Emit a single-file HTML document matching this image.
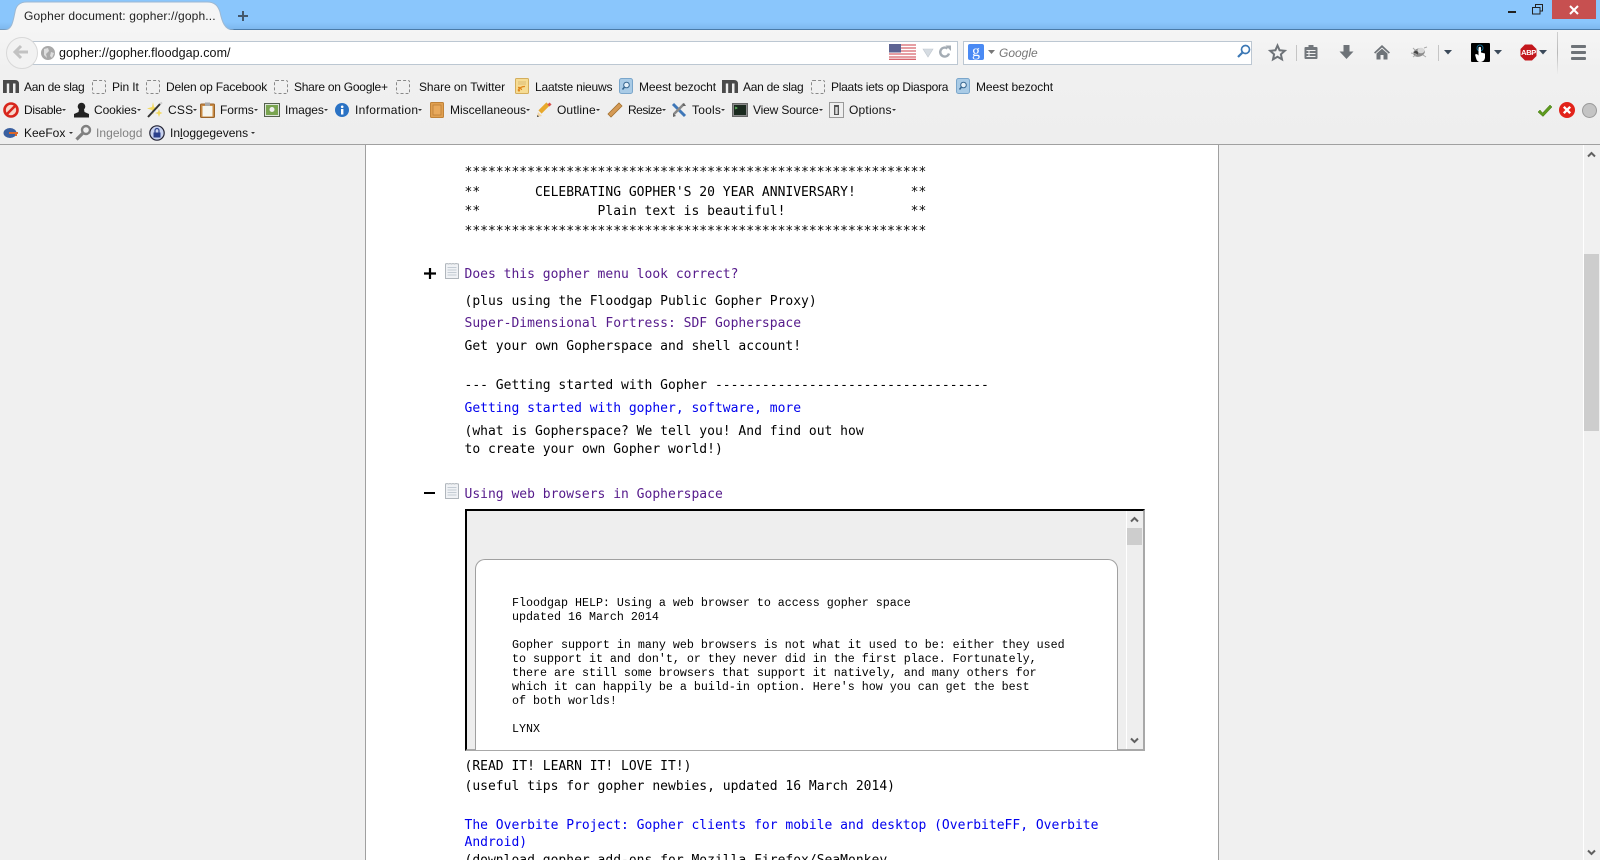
<!DOCTYPE html>
<html><head><meta charset="utf-8"><title>Gopher document</title>
<style>
html,body{margin:0;padding:0;width:1600px;height:860px;overflow:hidden;background:#f0f0f0}
#r{position:relative;width:1600px;height:860px;overflow:hidden;font-family:"Liberation Sans",sans-serif}
.a{position:absolute}
.t{position:absolute;white-space:nowrap;font-size:12px;line-height:16px;color:#111}
.t i{font-style:normal;display:inline-block;width:0;height:0;border:2px solid transparent;border-top:2px solid #333;border-bottom:0;margin-left:0;vertical-align:3px;letter-spacing:0}
.m{position:absolute;white-space:pre;font:13px/18px "DejaVu Sans Mono",monospace;color:#000;left:464.5px}
.v{color:#551a8b}.b{color:#0000ee}
.c{position:absolute;white-space:pre;font:11.67px/14px "Liberation Mono",monospace;color:#000;left:512px}
svg{position:absolute;overflow:visible}
.box{position:absolute;width:12px;height:12px;border:1px dashed #888;border-radius:2px;top:80px}
</style></head><body><div id="r">

<!-- title bar -->
<div class="a" style="left:0;top:0;width:1600px;height:30px;background:linear-gradient(#8ac6fc 0,#8ac6fc 22px,#7eb8ee 29px);border-bottom:1px solid #4a7ba8;box-sizing:border-box"></div>
<svg style="left:0;top:0" width="240" height="31"><path d="M0 30H4C12 30 13 22 15 12C16 6 19 2 27 2H207C215 2 218 6 220 12C222 22 225 30 233 30V31H0Z" fill="#f5f5f5" stroke="#9db8d2" stroke-width="1"/><rect x="0" y="30" width="240" height="1" fill="#f5f5f5"/></svg>
<div class="t" style="left:24px;top:8px;color:#222;letter-spacing:.15px">Gopher document: gopher://goph...</div>
<svg style="left:237px;top:10px" width="12" height="12"><path d="M6 1V11M1 6H11" stroke="#44586c" stroke-width="2"/></svg>
<div class="a" style="left:1552px;top:0;width:44px;height:19px;background:#c75050"></div>
<svg style="left:1566px;top:4px" width="16" height="12"><path d="M4 2L12 10M12 2L4 10" stroke="#fff" stroke-width="2"/></svg>
<div class="a" style="left:1508px;top:11px;width:8px;height:2px;background:#222"></div>
<svg style="left:1532px;top:4px" width="12" height="11"><path d="M3.5 3V.5H10.5V7H8M.5 3.5H8V10H.5Z" fill="none" stroke="#222"/></svg>

<!-- nav bar -->
<div class="a" style="left:0;top:30px;width:1600px;height:114px;background:linear-gradient(#f5f5f5 0,#f0f0f0 40px,#eeeeee 114px);border-bottom:1px solid #a0a0a0;box-sizing:content-box"></div>
<div class="a" style="left:24px;top:41px;width:932px;height:22px;background:#fff;border:1px solid #bcc7d2"></div>
<div class="a" style="left:6px;top:37px;width:30px;height:30px;border-radius:50%;background:#f2f2f2;border:1px solid #d8d8d8"></div>
<svg style="left:13px;top:45px" width="16" height="14"><path d="M8 1L2 7L8 13M2 7H15" fill="none" stroke="#c2c2c2" stroke-width="3"/></svg>
<svg style="left:41px;top:46px" width="14" height="14"><circle cx="7" cy="7" r="7" fill="#a9a9a9"/><path d="M3 3L7 2L8 5L5 8L6 12L3 9ZM10 6L13 7L11 12L9 10Z" fill="#dedede"/></svg>
<div class="t" style="left:59px;top:45px;font-size:12.5px;color:#111;letter-spacing:.07px">gopher://gopher.floodgap.com/</div>
<svg style="left:889px;top:44px" width="27" height="16"><rect width="27" height="16" fill="#fff"/><path d="M0 1H27M0 4H27M0 7H27M0 10H27M0 13H27M0 15.3H27" stroke="#d8636c" stroke-width="1.3"/><rect width="12" height="8.5" fill="#5d6392"/></svg>
<svg style="left:922px;top:48px" width="12" height="10"><path d="M1 1H11L6 9Z" fill="#d6dce2" stroke="#c0c7cf" stroke-width=".6"/></svg>
<svg style="left:938px;top:45px" width="14" height="14"><path d="M11 8.5A4.5 4.5 0 1 1 9.5 3.5" fill="none" stroke="#a4acb4" stroke-width="2.4"/><path d="M7.5 .5H13V6Z" fill="#a4acb4"/></svg>
<div class="a" style="left:963px;top:41px;width:287px;height:22px;background:#fff;border:1px solid #bcc7d2"></div>
<div class="a" style="left:968px;top:44px;width:16px;height:16px;background:#4a8af4;border-radius:2px;color:#fff;font:16px/15px 'Liberation Serif',serif;text-align:center">g</div>
<svg style="left:988px;top:50px" width="8" height="5"><path d="M0 0H7L3.5 4Z" fill="#777"/></svg>
<div class="t" style="left:999px;top:45px;color:#777;font-style:italic">Google</div>
<svg style="left:1236px;top:44px" width="15" height="15"><circle cx="9.5" cy="5.5" r="4" fill="none" stroke="#3c78b5" stroke-width="1.7"/><path d="M6.5 8.5L2 13" stroke="#3c78b5" stroke-width="2.2"/></svg>

<svg style="left:1269px;top:44px" width="17" height="17"><path d="M8.5 1.5L10.6 6.3L15.8 6.8L11.9 10.3L13 15.4L8.5 12.8L4 15.4L5.1 10.3L1.2 6.8L6.4 6.3Z" fill="none" stroke="#6e7378" stroke-width="2"/></svg>
<div class="a" style="left:1296px;top:45px;width:1px;height:16px;background:#c5c5c5"></div>
<svg style="left:1304px;top:44px" width="14" height="16"><path d="M1.5 3H4.5V1H9.5V3H12.5Q13.5 3 13.5 4V14Q13.5 15 12.500 15H1.500Q.5 15 .5 14V4Q.5 3 1.500 3Z" fill="#72777c"/><path d="M2.500 6.500H11.500M2.500 9.500H11.500M2.500 12.500H11.500M5 6V13" stroke="#f2f2f2" stroke-width="1"/></svg>
<svg style="left:1339px;top:44px" width="15" height="16"><path d="M4.500 1H10.500V7.500H14.500L7.500 15L.5 7.500H4.500Z" fill="#6e7378"/></svg>
<svg style="left:1374px;top:45px" width="16" height="15"><path d="M8 0L16 7.500L14.800 8.600L8 2.500L1.200 8.600L0 7.500Z" fill="#6e7378"/><path d="M2.500 8.500L8 3.700L13.500 8.500V14.500H9.500V10H6.500V14.500H2.500Z" fill="#6e7378"/></svg>
<svg style="left:1410px;top:45px" width="18" height="15"><ellipse cx="9" cy="7.500" rx="6" ry="4.200" fill="#8c8c8c" transform="rotate(-15 9 7.500)"/><ellipse cx="11" cy="5.500" rx="3.500" ry="2.800" fill="#d8d8d8"/><circle cx="6" cy="8" r="2" fill="#444"/><path d="M1 8L6 9M3 12L7 9M13 10L16 12M14 3L17 2M5 5L3 3" stroke="#aaa"/></svg>
<div class="a" style="left:1438px;top:45px;width:1px;height:16px;background:#c5c5c5"></div>
<svg style="left:1444px;top:50px" width="9" height="5"><path d="M0 0H8L4 4.500Z" fill="#3b4a5a"/></svg>
<div class="a" style="left:1471px;top:43px;width:19px;height:19px;background:#000;border-radius:1px;border:0"></div>
<svg style="left:1471px;top:43px" width="19" height="19"><circle cx="9" cy="5" r="3" fill="none" stroke="#136a8f" stroke-width="1"/><path d="M7.500 4.500Q9 3 10 4.500V9.500L14 10.500V15Q13 19 9 19Q6 19 5 15L4 11.500L6 11L7.500 12.500Z" fill="#fff"/></svg>
<svg style="left:1494px;top:50px" width="9" height="5"><path d="M0 0H8L4 4.500Z" fill="#3b4a5a"/></svg>
<svg style="left:1520px;top:44px" width="17" height="17"><path d="M5 .5H12L16.500 5V12L12 16.500H5L.5 12V5Z" fill="#c3171c"/></svg>
<div class="a" style="left:1520px;top:47px;width:17px;text-align:center;font:bold 7.500px/11px 'Liberation Sans',sans-serif;letter-spacing:-.4px;color:#fff">ABP</div>
<svg style="left:1539px;top:50px" width="9" height="5"><path d="M0 0H8L4 4.500Z" fill="#3b4a5a"/></svg>
<div class="a" style="left:1557px;top:32px;width:1px;height:42px;background:linear-gradient(#d0d0d0,#b8b8b8 50%,#eee)"></div>
<div class="a" style="left:1571px;top:45px;width:15px;height:3px;background:#6e7378;border-radius:1px"></div>
<div class="a" style="left:1571px;top:51px;width:15px;height:3px;background:#6e7378;border-radius:1px"></div>
<div class="a" style="left:1571px;top:57px;width:15px;height:3px;background:#6e7378;border-radius:1px"></div>

<!-- bookmarks -->
<svg style="left:3px;top:80px" width="16" height="13"><path d="M0 0H12Q16 0 16 4V13H12.500V3.500H10V13H6.200V3.500H3.800V13H0Z" fill="#4a4a4a"/></svg>
<div class="t" style="left:24px;top:79px;letter-spacing:-.27px">Aan de slag</div>
<div class="box" style="left:92px"></div><div class="t" style="left:112px;top:79px;letter-spacing:-.1px">Pin It</div>
<div class="box" style="left:146px"></div><div class="t" style="left:166px;top:79px;letter-spacing:-.18px">Delen op Facebook</div>
<div class="box" style="left:274px"></div><div class="t" style="left:294px;top:79px;letter-spacing:-.25px">Share on Google+</div>
<div class="box" style="left:396px"></div><div class="t" style="left:419px;top:79px;letter-spacing:-.07px">Share on Twitter</div>
<svg style="left:515px;top:78px" width="14" height="16"><rect x=".5" y=".5" width="13" height="15" rx="1" fill="#f6dc94" stroke="#d4ae5c"/><path d="M3 4H11M3 6H11" stroke="#d4b06a" stroke-width=".8"/><path d="M3 12.500A7 7 0 0 1 10 8.500M3 9.500A3 3 0 0 1 6.500 12" fill="none" stroke="#e0861a" stroke-width="1.300"/><circle cx="4" cy="12.500" r="1.100" fill="#e0861a"/></svg>
<div class="t" style="left:535px;top:79px;letter-spacing:-.2px">Laatste nieuws</div>
<svg style="left:619px;top:78px" width="14" height="16"><rect x=".5" y=".5" width="13" height="15" rx="2" fill="#a9cbe6" stroke="#7aa6cb"/><circle cx="7.500" cy="7" r="2.800" fill="#e6f1f9" stroke="#35658f"/><path d="M5.500 9L3.500 11.500" stroke="#35658f" stroke-width="1.500"/></svg>
<div class="t" style="left:639px;top:79px;letter-spacing:-.08px">Meest bezocht</div>
<svg style="left:722px;top:80px" width="16" height="13"><path d="M0 0H12Q16 0 16 4V13H12.500V3.500H10V13H6.200V3.500H3.800V13H0Z" fill="#4a4a4a"/></svg>
<div class="t" style="left:743px;top:79px;letter-spacing:-.27px">Aan de slag</div>
<div class="box" style="left:811px"></div><div class="t" style="left:831px;top:79px;letter-spacing:-.27px">Plaats iets op Diaspora</div>
<svg style="left:956px;top:78px" width="14" height="16"><rect x=".5" y=".5" width="13" height="15" rx="2" fill="#a9cbe6" stroke="#7aa6cb"/><circle cx="7.500" cy="7" r="2.800" fill="#e6f1f9" stroke="#35658f"/><path d="M5.500 9L3.500 11.500" stroke="#35658f" stroke-width="1.500"/></svg>
<div class="t" style="left:976px;top:79px;letter-spacing:-.08px">Meest bezocht</div>

<!-- web developer row -->
<svg style="left:3px;top:102px" width="16" height="16"><circle cx="8" cy="8" r="6.500" fill="#f8d8cc" stroke="#d8261c" stroke-width="2.600"/><path d="M3.500 12.500L12.500 3.500" stroke="#d8261c" stroke-width="2.600"/></svg>
<div class="t" style="left:24px;top:102px;letter-spacing:-.3px">Disable<i></i></div>
<svg style="left:73px;top:102px" width="17" height="16"><circle cx="8.500" cy="4.500" r="3.800" fill="#222"/><path d="M6 7H11L11.500 10L16 12V15.500H1V12L5.500 10Z" fill="#222"/></svg>
<div class="t" style="left:94px;top:102px;letter-spacing:-.1px">Cookies<i></i></div>
<svg style="left:147px;top:102px" width="16" height="16"><path d="M6 0L7 5L11 6.500L7 8L6 13L5 8L0 6.500L5 5ZM12 7L13 10L15.500 11L13 12L12 15L11 12L8 11L11 10Z" fill="#f3d95e"/><path d="M1 15L13 2" stroke="#333" stroke-width="2"/><path d="M13 2L15 .5" stroke="#ccc" stroke-width="2"/></svg>
<div class="t" style="left:168px;top:102px;letter-spacing:.2px">CSS<i></i></div>
<svg style="left:200px;top:102px" width="15" height="16"><rect x=".5" y="2" width="14" height="13.500" rx="1" fill="#c98a43" stroke="#9a6328"/><rect x="2.500" y="4" width="10" height="10.500" fill="#f5f5ee"/><rect x="5" y=".5" width="5" height="3.500" fill="#aaa"/></svg>
<div class="t" style="left:220px;top:102px;letter-spacing:-.05px">Forms<i></i></div>
<svg style="left:264px;top:103px" width="16" height="14"><rect x=".5" y=".5" width="15" height="13" fill="#dde5d8" stroke="#55604f"/><rect x="2" y="2" width="12" height="10" fill="#79a450"/><circle cx="8" cy="6.500" r="2.500" fill="#eee"/></svg>
<div class="t" style="left:285px;top:102px;letter-spacing:-.1px">Images<i></i></div>
<svg style="left:335px;top:103px" width="14" height="14"><circle cx="7" cy="7" r="7" fill="#2a72c4"/><rect x="6" y="6" width="2.400" height="5.500" fill="#fff"/><circle cx="7.200" cy="3.800" r="1.300" fill="#fff"/></svg>
<div class="t" style="left:355px;top:102px;letter-spacing:.3px">Information<i></i></div>
<svg style="left:430px;top:102px" width="14" height="16"><rect x=".5" y=".5" width="13" height="15" rx="1" fill="#e0a050" stroke="#c08238"/><rect x="3" y="3" width="8" height="10" fill="#e8a95c" stroke="#b77a33" stroke-width=".7"/></svg>
<div class="t" style="left:450px;top:102px">Miscellaneous<i></i></div>
<svg style="left:536px;top:102px" width="16" height="16"><path d="M4 10L12 2" stroke="#e8a92c" stroke-width="4.500"/><path d="M12.500 1.500L14.500 3.500" stroke="#d9534f" stroke-width="3"/><path d="M1 15L2 10L6 14Z" fill="#f3d6a4"/><path d="M1 15L1.500 13L3 14.500Z" fill="#333"/></svg>
<div class="t" style="left:557px;top:102px;letter-spacing:.1px">Outline<i></i></div>
<svg style="left:607px;top:102px" width="16" height="16"><path d="M1 12L12 1L15 4L4 15Z" fill="#d59a55" stroke="#a3712f" stroke-width=".8"/></svg>
<div class="t" style="left:628px;top:102px;letter-spacing:-.5px">Resize<i></i></div>
<svg style="left:671px;top:102px" width="16" height="16"><path d="M2 2L14 14" stroke="#3f77b8" stroke-width="3"/><path d="M13 2L3 12" stroke="#888" stroke-width="2.500"/><path d="M13 1L15 4L12 4L11.500 2Z" fill="#666"/><path d="M2 11L5 14L2 15Z" fill="#666"/></svg>
<div class="t" style="left:692px;top:102px;letter-spacing:.2px">Tools<i></i></div>
<svg style="left:732px;top:103px" width="16" height="14"><rect x=".5" y=".5" width="15" height="13" fill="#8a8a8a" stroke="#666"/><rect x="2" y="2" width="12" height="10" fill="#1a2a1e"/><path d="M3 4L5 5L3 6" fill="none" stroke="#6ccf6c" stroke-width=".8"/></svg>
<div class="t" style="left:753px;top:102px;letter-spacing:-.15px">View Source<i></i></div>
<svg style="left:829px;top:102px" width="15" height="16"><rect x=".5" y=".5" width="14" height="15" fill="#efefef" stroke="#999"/><rect x="5" y="3" width="5" height="10" fill="#555"/><rect x="6.300" y="5" width="2.400" height="7" fill="#ddd"/></svg>
<div class="t" style="left:849px;top:102px;letter-spacing:.2px">Options<i></i></div>

<svg style="left:1537px;top:104px" width="15" height="13"><path d="M1 8L3 6L5.500 9L13 1L15 3L6 12.500Z" fill="#5d9a1d" stroke="#3f7310" stroke-width=".5"/></svg>
<svg style="left:1559px;top:102px" width="16" height="16"><circle cx="8" cy="8" r="8" fill="#e2231a"/><path d="M4.800 4.800L11.200 11.200M11.200 4.800L4.800 11.200" stroke="#fff" stroke-width="2.400"/></svg>
<svg style="left:1581.500px;top:103px" width="15" height="15"><circle cx="7.500" cy="7.500" r="7" fill="#c4c4c4" stroke="#9a9a9a"/></svg>

<!-- keefox row -->
<svg style="left:3px;top:126px" width="16" height="14"><ellipse cx="7" cy="7" rx="6.500" ry="5" fill="#3a5f9f"/><path d="M6 7H15M13 7V10" stroke="#d9662a" stroke-width="2"/></svg>
<div class="t" style="left:24px;top:125px">KeeFox <i></i></div>
<svg style="left:75px;top:125px" width="16" height="16"><circle cx="11" cy="5" r="4" fill="none" stroke="#808080" stroke-width="2.400"/><path d="M8 8L1.500 14.500" stroke="#808080" stroke-width="3.200"/></svg>
<div class="t" style="left:96px;top:125px;color:#808080;letter-spacing:.05px">Ingelogd</div>
<svg style="left:149px;top:125px" width="16" height="16"><circle cx="8" cy="8" r="7.200" fill="#c8d2ee" stroke="#223" stroke-width="1.200"/><rect x="4.500" y="7.500" width="7" height="5" fill="#2a3f8c"/><path d="M6 7.500V5.500A2 2 0 0 1 10 5.500V7.500" fill="none" stroke="#2a3f8c" stroke-width="1.200"/></svg>
<div class="t" style="left:170px;top:125px">In<u>l</u>oggegevens <i></i></div>

<!-- page -->
<div class="a" style="left:0;top:145px;width:1600px;height:715px;background:#f0f0f0"></div>
<div class="a" style="left:365px;top:145px;width:852px;height:715px;background:#fff;border-left:1px solid #a0a0a0;border-right:1px solid #a0a0a0"></div>
<div class="a" style="left:1583px;top:145px;width:1px;height:715px;background:#fff"></div>
<div class="a" style="left:1584px;top:254px;width:15px;height:177px;background:#cdcdcd"></div>
<svg style="left:1587px;top:151px" width="9" height="7"><path d="M1 5.500L4.500 2L8 5.500" fill="none" stroke="#606060" stroke-width="2"/></svg>
<svg style="left:1587px;top:849px" width="9" height="7"><path d="M1 1.500L4.500 5L8 1.500" fill="none" stroke="#606060" stroke-width="2"/></svg>

<div class="m" style="top:164px">***********************************************************</div>
<div class="m" style="top:184px">**       CELEBRATING GOPHER'S 20 YEAR ANNIVERSARY!       **</div>
<div class="m" style="top:203px">**               Plain text is beautiful!                **</div>
<div class="m" style="top:223px">***********************************************************</div>

<svg style="left:423px;top:267px" width="14" height="13"><path d="M7 1V12M1 6.500H13" stroke="#000" stroke-width="2.200"/></svg>
<svg style="left:445px;top:263px" width="14" height="16"><path d="M.5 1L2 .5L3.500 1L5 .5L6.500 1L8 .5L9.500 1L11 .5L13.500 1V15.500H.5Z" fill="#f0f2f5" stroke="#b0b6bc"/><path d="M2.500 4.500H11.500M2.500 7H11.500M2.500 9.500H11.500M2.500 12H11.500" stroke="#c4ccd4"/></svg>
<div class="m v" style="top:266px">Does this gopher menu look correct?</div>
<div class="m" style="top:293px">(plus using the Floodgap Public Gopher Proxy)</div>
<div class="m v" style="top:315px">Super-Dimensional Fortress: SDF Gopherspace</div>
<div class="m" style="top:338px">Get your own Gopherspace and shell account!</div>
<div class="m" style="top:377px">--- Getting started with Gopher -----------------------------------</div>
<div class="m b" style="top:400px">Getting started with gopher, software, more</div>
<div class="m" style="top:423px">(what is Gopherspace? We tell you! And find out how</div>
<div class="m" style="top:441px">to create your own Gopher world!)</div>

<div class="a" style="left:424px;top:492px;width:11px;height:2px;background:#000"></div>
<svg style="left:445px;top:483px" width="14" height="16"><path d="M.5 1L2 .5L3.500 1L5 .5L6.500 1L8 .5L9.500 1L11 .5L13.500 1V15.500H.5Z" fill="#f0f2f5" stroke="#b0b6bc"/><path d="M2.500 4.500H11.500M2.500 7H11.500M2.500 9.500H11.500M2.500 12H11.500" stroke="#c4ccd4"/></svg>
<div class="m v" style="top:486px">Using web browsers in Gopherspace</div>

<!-- iframe -->
<div class="a" style="left:465px;top:509px;width:680px;height:242px;box-sizing:border-box;border:2px solid;border-color:#000 #a8a8a8 #a8a8a8 #000;background:#eeeeee;overflow:hidden"></div>
<div class="a" style="left:475px;top:559px;width:641px;height:190px;background:#fff;border:1px solid #a0a0a0;border-bottom:0;border-radius:10px 10px 0 0"></div>
<div class="a" style="left:1126px;top:511px;width:1px;height:238px;background:#fff"></div>
<div class="a" style="left:1127px;top:528px;width:15px;height:17px;background:#cdcdcd"></div>
<svg style="left:1130px;top:516px" width="9" height="7"><path d="M1 5.500L4.500 2L8 5.500" fill="none" stroke="#606060" stroke-width="2"/></svg>
<svg style="left:1130px;top:737px" width="9" height="7"><path d="M1 1.500L4.500 5L8 1.500" fill="none" stroke="#606060" stroke-width="2"/></svg>
<div class="c" style="top:596px">Floodgap HELP: Using a web browser to access gopher space</div>
<div class="c" style="top:610px">updated 16 March 2014</div>
<div class="c" style="top:638px">Gopher support in many web browsers is not what it used to be: either they used</div>
<div class="c" style="top:652px">to support it and don't, or they never did in the first place. Fortunately,</div>
<div class="c" style="top:666px">there are still some browsers that support it natively, and many others for</div>
<div class="c" style="top:680px">which it can happily be a build-in option. Here's how you can get the best</div>
<div class="c" style="top:694px">of both worlds!</div>
<div class="c" style="top:722px">LYNX</div>

<div class="m" style="top:758px">(READ IT! LEARN IT! LOVE IT!)</div>
<div class="m" style="top:778px">(useful tips for gopher newbies, updated 16 March 2014)</div>
<div class="m b" style="top:817px">The Overbite Project: Gopher clients for mobile and desktop (OverbiteFF, Overbite</div>
<div class="m b" style="top:834px">Android)</div>
<div class="m" style="top:852px">(download gopher add-ons for Mozilla Firefox/SeaMonkey</div>

</div></body></html>
